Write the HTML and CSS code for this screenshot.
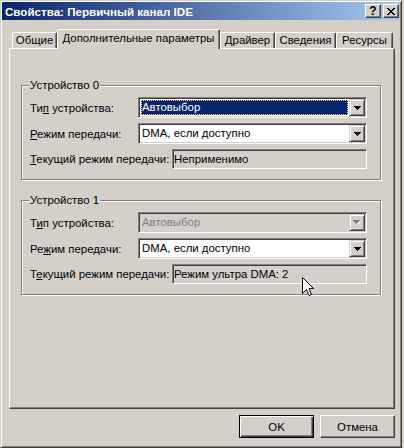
FILE: index.html
```html
<!DOCTYPE html>
<html lang="ru">

<head>
    <meta charset="UTF-8">
    <meta name="viewport" content="width=device-width, initial-scale=1.0">
    <title>Свойства: Первичный канал IDE</title>
    <link rel="stylesheet" href="styles.css">
</head>

<body>

    <div class="window">
        <div class="titlebar">
            <span class="title">Свойства: Первичный канал IDE</span>
            <div class="caption-buttons">
                <span class="cap-btn cap-help">?</span>
                <span class="cap-btn">
                    <svg width="8" height="7" viewBox="0 0 8 7" shape-rendering="crispEdges">
                        <path d="M0 0h2v1h-2z M6 0h2v1h-2z M1 1h2v1h-2z M5 1h2v1h-2z M2 2h4v1h-4z M3 3h2v1h-2z M2 4h4v1h-4z M1 5h2v1h-2z M5 5h2v1h-2z M0 6h2v1h-2z M6 6h2v1h-2z" fill="#000"/>
                    </svg>
                </span>
            </div>
        </div>

        <div class="tabs">
            <div class="tab tab-general">Общие</div>
            <div class="tab tab-advanced active">Дополнительные параметры</div>
            <div class="tab tab-driver">Драйвер</div>
            <div class="tab tab-details">Сведения</div>
            <div class="tab tab-resources">Ресурсы</div>
        </div>

        <div class="panel">
            <!-- Device 0 -->
            <div class="group">
                <div class="group-title">Устройство 0</div>
                <div class="row">
                    <span class="label">Ти<u>п</u> устройства:</span>
                    <div class="combo">
                        <span class="combo-value selected">Автовыбор</span>
                        <span class="drop">
                            <svg width="7" height="4" viewBox="0 0 7 4" shape-rendering="crispEdges"><path d="M0 0H7V1H6V2H5V3H4V4H3V3H2V2H1V1H0Z" fill="#000"/></svg>
                        </span>
                    </div>
                </div>
                <div class="row">
                    <span class="label"><u>Р</u>ежим передачи:</span>
                    <div class="combo">
                        <span class="combo-value">DMA, если доступно</span>
                        <span class="drop">
                            <svg width="7" height="4" viewBox="0 0 7 4" shape-rendering="crispEdges"><path d="M0 0H7V1H6V2H5V3H4V4H3V3H2V2H1V1H0Z" fill="#000"/></svg>
                        </span>
                    </div>
                </div>
                <div class="row">
                    <span class="label label-wide"><u>Т</u>екущий режим передачи:</span>
                    <div class="field">Неприменимо</div>
                </div>
            </div>

            <!-- Device 1 -->
            <div class="group">
                <div class="group-title">Устройство 1</div>
                <div class="row">
                    <span class="label">Т<u>и</u>п устройства:</span>
                    <div class="combo disabled">
                        <span class="combo-value">Автовыбор</span>
                        <span class="drop">
                            <svg width="8" height="5" viewBox="0 0 8 5" shape-rendering="crispEdges">
                                <path d="M1 1H8V2H7V3H6V4H5V5H4V4H3V3H2V2H1Z" fill="#fff"/>
                                <path d="M0 0H7V1H6V2H5V3H4V4H3V3H2V2H1V1H0Z" fill="#808080"/>
                            </svg>
                        </span>
                    </div>
                </div>
                <div class="row">
                    <span class="label">Ре<u>ж</u>им передачи:</span>
                    <div class="combo">
                        <span class="combo-value">DMA, если доступно</span>
                        <span class="drop">
                            <svg width="7" height="4" viewBox="0 0 7 4" shape-rendering="crispEdges"><path d="M0 0H7V1H6V2H5V3H4V4H3V3H2V2H1V1H0Z" fill="#000"/></svg>
                        </span>
                    </div>
                </div>
                <div class="row">
                    <span class="label label-wide">Т<u>е</u>кущий режим передачи:</span>
                    <div class="field">Режим ультра DMA: 2</div>
                </div>
            </div>
        </div>

        <div class="buttons">
            <button type="button" class="btn btn-default">OK</button>
            <button type="button" class="btn">Отмена</button>
        </div>
    </div>

    <!-- mouse pointer over the dialog -->
    <svg class="cursor" width="13" height="20" viewBox="0 0 13 20">
        <path d="M0.5 0.5V16.5L4.5 12.5L7 18.5L9.5 17.5L7 11.5H11.5Z" fill="#fff" stroke="#000" stroke-width="1" stroke-linejoin="miter"/>
    </svg>

</body>

</html>
```

FILE: styles.css
```css
/* Classic dialog look */
body {
    margin: 0;
    background: #d4d0c8;
    font-family: "Liberation Sans", Arial, sans-serif;
    font-size: 11.4px;
    color: #000;
}

.window {
    box-sizing: border-box;
    width: 402px;
    height: 448px;
    padding: 1px;
    border: 1px solid;
    border-color: #d4d0c8 #404040 #404040 #d4d0c8;
    box-shadow: inset 1px 1px 0 #fff, inset -1px -1px 0 #808080;
    display: flex;
    flex-direction: column;
}

.titlebar {
    height: 18px;
    display: flex;
    align-items: center;
    justify-content: space-between;
    padding: 0 1px 0 3px;
    background: linear-gradient(to right, #0a246a, #a6caf0);
    color: #fff;
    font-weight: bold;
}

.title {
    padding-top: 1px;
    font-size: 11.6px;
}

.caption-buttons {
    display: flex;
    gap: 2px;
}

.cap-btn {
    box-sizing: border-box;
    width: 16px;
    height: 14px;
    display: flex;
    align-items: center;
    justify-content: center;
    background: #d4d0c8;
    border: 1px solid;
    border-color: #fff #404040 #404040 #fff;
    box-shadow: inset -1px -1px 0 #808080;
    color: #000;
}

.cap-help {
    font-size: 12px;
    line-height: 12px;
}

/* Tabs */
.tabs {
    display: flex;
    align-items: flex-end;
    height: 19px;
    margin: 9px 0 0 10px;
}

.tab {
    box-sizing: border-box;
    height: 16px;
    border: 1px solid;
    border-bottom: 0;
    border-color: #fff #404040 transparent #fff;
    border-radius: 2px 2px 0 0;
    box-shadow: inset -1px 0 0 #808080;
    text-align: center;
    line-height: 15px;
    white-space: nowrap;
}

.tab.active {
    position: relative;
    z-index: 1;
    height: 20px;
    margin-bottom: -1px;
    background: #d4d0c8;
    line-height: 16px;
}

.tab-general { width: 45px; }
.tab-advanced { width: 163px; }
.tab-driver { width: 55px; }
.tab-details { width: 61px; }
.tab-resources { width: 57px; }

.panel {
    box-sizing: border-box;
    width: 386px;
    height: 361px;
    margin-left: 7px;
    padding: 36px 13px 0 11px;
    border: 1px solid;
    border-color: #fff #404040 #404040 #fff;
    box-shadow: inset -1px -1px 0 #808080;
}

/* Group boxes */
.group {
    border: 1px solid #808080;
    box-shadow: inset 1px 1px 0 #fff, 1px 1px 0 #fff;
    padding: 0 13px 10px 8px;
}

.group + .group {
    margin-top: 20px;
}

.group-title {
    display: table;
    margin: -7px 0 5px -1px;
    padding: 0 1px;
    background: #d4d0c8;
    line-height: 13px;
}

.row {
    display: flex;
    align-items: center;
}

.row + .row {
    margin-top: 5px;
}

.label {
    flex: none;
    width: 108px;
    white-space: nowrap;
}

.label-wide {
    width: 142px;
}

/* Combo boxes and fields */
.combo {
    box-sizing: border-box;
    display: flex;
    width: 229px;
    height: 21px;
    padding: 1px;
    background: #fff;
    border: 1px solid;
    border-color: #808080 #fff #fff #808080;
    box-shadow: inset 1px 1px 0 #404040, inset -1px -1px 0 #d4d0c8;
}

.combo-value {
    flex: 1;
    margin: 1px;
    padding-left: 1px;
    line-height: 15px;
    white-space: nowrap;
}

.combo-value.selected {
    background: #0a246a;
    color: #fff;
    outline: 1px dotted #f5db95;
    outline-offset: -1px;
}

.combo.disabled {
    background: #d4d0c8;
    color: #808080;
}

.drop {
    box-sizing: border-box;
    flex: none;
    width: 16px;
    height: 17px;
    display: flex;
    align-items: center;
    justify-content: center;
    background: #d4d0c8;
    border: 1px solid;
    border-color: #d4d0c8 #404040 #404040 #d4d0c8;
    box-shadow: inset 1px 1px 0 #fff, inset -1px -1px 0 #808080;
}

.drop svg {
    display: block;
}

.field {
    box-sizing: border-box;
    width: 195px;
    height: 20px;
    padding-left: 1px;
    line-height: 18px;
    background: #d4d0c8;
    border: 1px solid;
    border-color: #808080 #fff #fff #808080;
    box-shadow: inset 1px 1px 0 #404040, inset -1px -1px 0 #d4d0c8;
    white-space: nowrap;
}

/* Dialog buttons */
.buttons {
    display: flex;
    justify-content: flex-end;
    gap: 6px;
    margin: 6px 5px 0 0;
}

.btn {
    box-sizing: border-box;
    width: 75px;
    height: 23px;
    padding: 0;
    font-family: inherit;
    font-size: 11.4px;
    color: #000;
    background: #d4d0c8;
    border: 1px solid;
    border-color: #fff #404040 #404040 #fff;
    box-shadow: inset -1px -1px 0 #808080;
}

.btn-default {
    border-color: #000;
    box-shadow: inset 1px 1px 0 #fff, inset -1px -1px 0 #404040, inset -2px -2px 0 #808080;
}

.cursor {
    position: absolute;
    left: 302px;
    top: 277px;
}
```
